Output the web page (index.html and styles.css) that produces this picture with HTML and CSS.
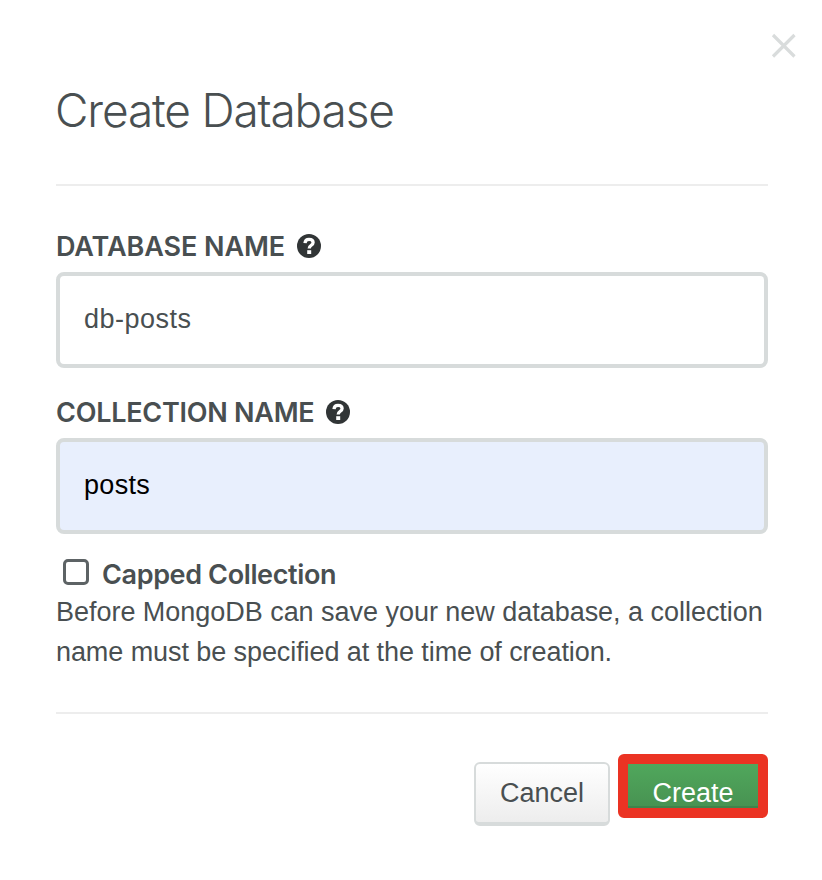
FILE: index.html
```html
<!DOCTYPE html>
<html lang="en">
<head>
<meta charset="utf-8">
<title>Create Database</title>
<link rel="stylesheet" href="styles.css">
</head>
<body>
<main class="modal">
  <button class="close" aria-label="Close"><svg width="26" height="26" viewBox="0 0 26 26"><path d="M2 2 23.5 23.5M23.5 2 2 23.5" fill="none" stroke="#d9dcdc" stroke-width="3.2"/></svg></button>
  <header class="header"><h1 class="title">Create Database</h1></header>
  <section class="body">
    <div class="label"><span class="label-db">DATABASE NAME</span><svg class="help" width="24" height="24" viewBox="0 0 24 24"><circle cx="12" cy="12" r="12" fill="#313536"/><path d="M8 9.1C8.2 6.6 9.7 5.4 12 5.4c2.5 0 4.1 1.2 4.1 3.1 0 2.9-3.9 2.6-3.9 5.9" fill="none" stroke="#fff" stroke-width="3.3"/><path d="M10.2 16.2h4v3.8h-4z" fill="#fff"/></svg></div>
    <div class="field"><span class="value-db">db-posts</span></div>
    <div class="label label-second"><span class="label-coll">COLLECTION NAME</span><svg class="help" width="24" height="24" viewBox="0 0 24 24"><circle cx="12" cy="12" r="12" fill="#313536"/><path d="M8 9.1C8.2 6.6 9.7 5.4 12 5.4c2.5 0 4.1 1.2 4.1 3.1 0 2.9-3.9 2.6-3.9 5.9" fill="none" stroke="#fff" stroke-width="3.3"/><path d="M10.2 16.2h4v3.8h-4z" fill="#fff"/></svg></div>
    <div class="field autofill"><span class="value-coll">posts</span></div>
    <div class="check-row"><span class="checkbox"></span><span class="check-label">Capped Collection</span></div>
    <p class="note"><span class="line-one">Before MongoDB can save your new database, a collection</span><br><span class="line-two">name must be specified at the time of creation.</span></p>
  </section>
  <footer class="footer">
    <button class="btn cancel">Cancel</button>
    <div class="highlight"><button class="btn create">Create</button></div>
  </footer>
</main>
</body>
</html>
```
FILE: styles.css
```css
* { box-sizing: border-box; }
body { margin: 0; background: #fff; color: #494f51; font-family: "Liberation Sans", Arial, sans-serif; font-size: 27px; }
.modal { position: relative; width: 822px; height: 880px; padding: 0 54px 0 56px; }
.close { position: absolute; left: 771px; top: 33px; padding: 0; border: 0; background: none; width: 26px; height: 26px; }
.close svg { display: block; }
.header { height: 186px; padding-top: 80px; border-bottom: 2px solid #ededed; }
.title { margin: 0 0 0 -1px; font: 300 46px/60px Inter, sans-serif; letter-spacing: -1.15px; white-space: nowrap; }
.label { display: flex; align-items: center; gap: 12px; height: 40px; margin-top: 40px; font: 600 27px/40px Inter, sans-serif; white-space: nowrap; }
.label-db { padding-top: 2px; letter-spacing: -0.08px; }
.label-coll { padding-top: 2px; letter-spacing: -0.25px; }
.value-db { letter-spacing: 0.5px; }
.value-coll { letter-spacing: 0.3px; }
.label-second { margin-top: 24px; }
.help { flex: none; }
.field { display: flex; align-items: center; width: 712px; height: 96px; margin-top: 6px; padding: 0 24px 2px; border: 4px solid #d7dbdb; border-radius: 8px; background: #fff; }
.autofill { background: #e8effd; color: #000; }
.check-row { display: flex; align-items: center; height: 36px; margin-top: 22px; padding-left: 7px; font: 600 27px/36px Inter, sans-serif; }
.check-label { padding-top: 2px; letter-spacing: -0.37px; }
.checkbox { width: 26px; height: 26px; margin: -5px 13px 0 0; border: 3px solid #5d6365; border-radius: 5px; }
.note { margin: 0; line-height: 40px; white-space: nowrap; }
.line-one { letter-spacing: -0.03px; }
.line-two { letter-spacing: -0.08px; }
.footer { display: flex; justify-content: flex-end; align-items: flex-start; gap: 8px; margin-top: 40px; padding-top: 40px; border-top: 2px solid #ededed; }
.btn { padding: 0; font: 27px/30px "Liberation Sans", Arial, sans-serif; white-space: nowrap; }
.cancel { width: 136px; height: 64px; margin-top: 8px; border: 2px solid #d7dbdb; border-bottom-width: 4px; border-radius: 6px; background: linear-gradient(#fff, #ededed); color: #494f51; }
.highlight { width: 150px; height: 64px; border: 10px solid #eb3323; border-radius: 6px; background: #eb3323; }
.create { display: block; width: 130px; height: 44px; padding-top: 14px; border: 0; border-bottom: 2px solid #41834b; background: linear-gradient(#50a75c, #489352); color: #fff; }
```
